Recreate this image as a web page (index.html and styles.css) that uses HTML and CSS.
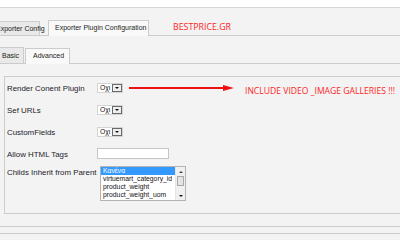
FILE: index.html
```html
<!DOCTYPE html>
<html>
<head>
<meta charset="utf-8">
<link rel="stylesheet" href="styles.css">
</head>
<body>
<div class="page">
  <div class="topbar"></div>
  <div class="tabs tabs-main">
    <div class="tab tab-first">Exporter Config</div>
    <div class="tab active tab-plugin">Exporter Plugin Configuration</div>
    <div class="brand">BESTPRICE.GR</div>
  </div>
  <div class="tabs tabs-sub">
    <div class="tab tab-basic">Basic</div>
    <div class="tab active tab-adv">Advanced</div>
  </div>
  <div class="panel">
    <div class="row">
      <span class="lbl">Render Conent Plugin</span>
      <div class="sel"><span class="sel-val">Οχι</span><span class="sel-btn"><i class="tri"></i></span></div>
    </div>
    <div class="row">
      <span class="lbl">Sef URLs</span>
      <div class="sel"><span class="sel-val">Οχι</span><span class="sel-btn"><i class="tri"></i></span></div>
    </div>
    <div class="row">
      <span class="lbl">CustomFields</span>
      <div class="sel"><span class="sel-val">Οχι</span><span class="sel-btn"><i class="tri"></i></span></div>
    </div>
    <div class="row">
      <span class="lbl">Allow HTML Tags</span>
      <div class="text-input"></div>
    </div>
    <div class="row row-list">
      <span class="lbl">Childs Inherit from Parent</span>
      <div class="listbox">
        <ul class="options">
          <li class="selected">Κανένα</li>
          <li>virtuemart_category_id</li>
          <li>product_weight</li>
          <li>product_weight_uom</li>
        </ul>
        <div class="scrollbar">
          <span class="sb-btn"><i class="tri-up"></i></span>
          <span class="sb-track"><span class="sb-thumb"></span></span>
          <span class="sb-btn"><i class="tri"></i></span>
        </div>
      </div>
    </div>
  </div>
  <div class="footer-line one"></div>
  <div class="footer-line two"></div>

  <svg class="arrow" width="106" height="8" viewBox="0 0 106 8">
    <line x1="0" y1="4" x2="96" y2="4" stroke="#ee1111" stroke-width="2"/>
    <polygon points="94,1 105,4 94,7" fill="#ee1111"/>
  </svg>
  <div class="note">INCLUDE VIDEO _IMAGE GALLERIES !!!</div>
</div>
</body>
</html>
```
FILE: styles.css
```css
* { box-sizing: border-box; }
html, body { margin: 0; padding: 0; }
body {
  background: #f3f3f3;
  font-family: "Liberation Sans", Arial, sans-serif;
  color: #1e1e1e;
}
.page {
  position: relative;
  width: 400px;
  height: 240px;
  overflow: hidden;
  background: #f3f3f3;
}
.topbar {
  height: 8px;
  background: #ffffff;
  border-bottom: 1px solid #d6d6d6;
}
.tabs {
  display: flex;
  align-items: flex-end;
  height: 28px;
  border-bottom: 1px solid #cccccc;
}
.tab {
  font-size: 7px;
  line-height: 13px;
  height: 14px;
  padding: 0 6px;
  border: 1px solid #cccccc;
  border-bottom: none;
  background: #e9e9e9;
  color: #222;
  white-space: nowrap;
}
.tab.active {
  background: #f9f9f9;
  height: 16px;
  margin-bottom: -1px;
  line-height: 14px;
}
.tab-first { margin-left: -12px; width: 52px; padding: 0 3px 0 7px; }
.tab-plugin { margin-left: 8px; width: 101px; }
.brand {
  margin-left: 24px;
  margin-bottom: 2px;
  font-size: 8.8px;
  line-height: 11px;
  color: #ff2424;
  font-family: "Open Sans", "Liberation Sans", sans-serif;
}
.tab-basic { margin-left: -4px; width: 28px; padding: 0 0 0 5px; height: 16px; line-height: 15px; }
.tab-adv { margin-left: 1px; width: 45px; height: 17px; padding: 0 7px; line-height: 16px; }

.panel {
  margin: 12px 0 0 4px;
  height: 138px;
  border: 1px solid #cccccc;
  border-right: none;
  padding: 1px 0 0 2px;
}
.row {
  display: flex;
  align-items: center;
  height: 22px;
}
.lbl {
  width: 90px;
  font-size: 7.9px;
  line-height: 10px;
  color: #1c1c2a;
  white-space: nowrap;
  flex: none;
}
.sel {
  display: flex;
  width: 26px;
  height: 10px;
  margin-bottom: 3px;
  background: #ffffff;
  border: 1px solid #d4d4d4;
}
.sel-val {
  width: 14px;
  overflow: hidden;
  font-size: 6.8px;
  line-height: 7px;
  padding-left: 2px;
  white-space: nowrap;
  color: #111;
}
.sel-btn {
  flex: 1;
  border: 1px solid #6a6a6a;
  background: #efefef;
  display: flex;
  align-items: center;
  justify-content: center;
}
.tri {
  display: block;
  width: 0;
  height: 0;
  border-left: 2.5px solid transparent;
  border-right: 2.5px solid transparent;
  border-top: 2.5px solid #111;
}
.tri-up {
  display: block;
  width: 0;
  height: 0;
  border-left: 2px solid transparent;
  border-right: 2px solid transparent;
  border-bottom: 2px solid #444;
}
.text-input {
  width: 72px;
  height: 11px;
  margin-bottom: 3px;
  background: #ffffff;
  border: 1px solid #c6c6c6;
}
.row-list {
  align-items: flex-start;
  height: auto;
}
.row-list .lbl { line-height: 14px; }
.listbox {
  display: flex;
  width: 86px;
  height: 35px;
  margin-left: 3px;
  background: #ffffff;
  border: 1px solid #b4b4b4;
}
.options {
  list-style: none;
  margin: 0;
  padding: 0;
  flex: 1;
  font-size: 6.8px;
  line-height: 8px;
  color: #111;
  overflow: hidden;
}
.options li { padding-left: 2px; white-space: nowrap; }
.options li.selected {
  background: #3399ff;
  color: #ffffff;
}
.scrollbar {
  width: 10px;
  display: flex;
  flex-direction: column;
  background: #f0f0f0;
  border-left: 1px solid #e6e6e6;
}
.sb-btn {
  height: 9px;
  display: flex;
  align-items: center;
  justify-content: center;
}
.sb-track { flex: 1; display: flex; flex-direction: column; }
.sb-thumb {
  height: 10px;
  margin: 0 1px;
  background: #e4e4e4;
  border: 1px solid #a8a8a8;
}
.footer-line {
  border-top: 1px solid #cccccc;
}
.footer-line.one { margin-top: 12px; height: 7px; }
.footer-line.two { height: 7px; }

.arrow {
  position: absolute;
  left: 129px;
  top: 84px;
}
.note {
  position: absolute;
  left: 245px;
  top: 86px;
  font-size: 8.6px;
  line-height: 11px;
  color: #ff2424;
  font-family: "Open Sans", "Liberation Sans", sans-serif;
  white-space: nowrap;
}
```
